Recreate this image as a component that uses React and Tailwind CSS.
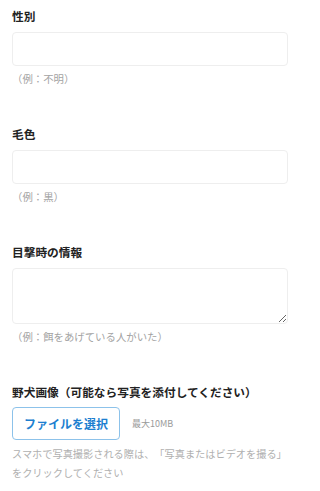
import React from 'react';

const fields = [
  { id: 'sex', label: '性別', hint: '（例：不明）' },
  { id: 'color', label: '毛色', hint: '（例：黒）' },
  { id: 'info', label: '目撃時の情報', hint: '（例：餌をあげている人がいた）', multi: true },
];

function Field({ label, hint, multi, first }) {
  return (
    <div className={first ? '' : 'mt-[38px]'}>
      <label className="block text-[11.7px] leading-[18px] font-bold text-[#222]">{label}</label>
      {multi ? (
        <textarea className="mt-[7px] block w-full h-[56px] rounded-[4px] border border-[#eeeeee] bg-white outline-none" />
      ) : (
        <input className="mt-[7px] block w-full h-[34px] rounded-[4px] border border-[#eeeeee] bg-white outline-none" />
      )}
      <p className="mt-[5px] text-[10.4px] leading-[16px] text-[#a3a3a3]">{hint}</p>
    </div>
  );
}

export default function App() {
  return (
    <div
      className="w-[300px] h-[491px] bg-white px-3 pt-[7px] overflow-hidden [text-spacing-trim:space-all]"
      style={{ fontFamily: '"Noto Sans CJK JP", "Noto Sans", sans-serif' }}
    >
      {fields.map((f, i) => (
        <Field key={f.id} {...f} first={i === 0} />
      ))}

      {/* 画像アップロード */}
      <div className="mt-[38px]">
        <label className="block text-[11.7px] leading-[18px] font-bold text-[#222] whitespace-nowrap">
          野犬画像（可能なら写真を添付してください）
        </label>
        <div className="mt-[6px] flex items-center gap-3">
          <button className="w-[108px] h-[33px] rounded-[4px] border border-[#8cc2ea] bg-white text-[12px] font-bold text-[#1d7fd0]">
            ファイルを選択
          </button>
          <span className="text-[9px] text-[#9a9a9a]">最大10MB</span>
        </div>
        <p className="mt-[4px] text-[10.2px] leading-[19px] text-[#b0b0b0]">
          <span className="block whitespace-nowrap">スマホで写真撮影される際は、「写真またはビデオを撮る」</span>
          <span className="block">をクリックしてください</span>
        </p>
      </div>
    </div>
  );
}
